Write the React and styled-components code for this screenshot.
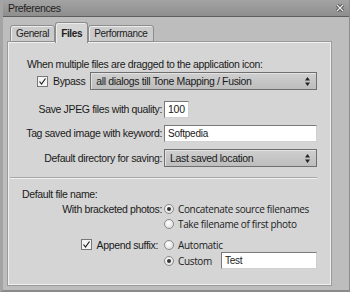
import React from 'react';
import styled, { createGlobalStyle } from 'styled-components';

const GlobalStyle = createGlobalStyle`
  html, body {
    margin: 0;
    padding: 0;
    background: #bcbcbc;
  }
  body {
    font-family: "Liberation Sans", Arial, sans-serif;
    font-size: 10.5px;
    letter-spacing: -0.35px;
    color: #1a1a1a;
  }
`;

const Window = styled.div`
  width: 350px;
  height: 292px;
  box-sizing: border-box;
  display: flex;
  flex-direction: column;
  background: #bdbdbd;
  border-left: 3px solid #a4a4a4;
  border-right: 1px solid #8c8c8c;
  border-bottom: 2px solid #8a8a8a;
  overflow: hidden;
`;

const TitleBar = styled.div`
  height: 16px;
  margin-left: -3px;
  margin-right: -1px;
  flex: none;
  display: flex;
  align-items: center;
  justify-content: space-between;
  padding: 0 6px 0 8px;
  background: linear-gradient(#a3a3a3, #8e8e8e);
  border-bottom: 1px solid #5e5e5e;
  color: #1e1e1e;
`;

const CloseButton = styled.svg`
  width: 8px;
  height: 8px;
`;

const Body = styled.div`
  flex: 1;
  display: flex;
  flex-direction: column;
  padding: 5px 18px 5px 5px;
`;

const TabRow = styled.div`
  display: flex;
  align-items: flex-end;
  height: 20px;
  padding-left: 2px;
  position: relative;
  z-index: 1;
`;

const Tab = styled.div`
  box-sizing: border-box;
  height: ${p => (p.$active ? '21px' : '17px')};
  margin-bottom: ${p => (p.$active ? '-1px' : '0')};
  padding: 0 5px;
  display: flex;
  align-items: center;
  border: 1px solid #8d8d8d;
  border-bottom: ${p => (p.$active ? 'none' : '1px solid #8d8d8d')};
  border-radius: 3px 3px 0 0;
  background: ${p => (p.$active ? '#d5d5d5' : '#cbcbcb')};
  box-shadow: inset 1px 1px 0 #ececec;
  font-size: 10px;
  font-weight: ${p => (p.$active ? 'bold' : 'normal')};
  color: #222;
`;

const Panel = styled.div`
  flex: 1;
  box-sizing: border-box;
  background: #d5d5d5;
  border: 1px solid #f0f0f0;
  box-shadow: 0 0 0 1px #9a9a9a;
  display: grid;
  grid-template-columns: 153px 1fr;
  column-gap: 2px;
  align-content: start;
  padding: 0 13px 0 0;
`;

const Wide = styled.div`
  grid-column: 1 / -1;
  display: flex;
  align-items: center;
  padding-left: ${p => p.$indent || 0}px;
  margin-top: ${p => p.$top || 0}px;
  height: ${p => p.$h || 16}px;
`;

const Label = styled.div`
  display: flex;
  align-items: center;
  justify-content: flex-end;
  gap: 5px;
  white-space: nowrap;
  margin-top: ${p => p.$top || 0}px;
  padding-right: ${p => p.$pr || 0}px;
  height: ${p => p.$h || 16}px;
`;

const Control = styled.div`
  display: flex;
  align-items: center;
  margin-top: ${p => p.$top || 0}px;
  height: ${p => p.$h || 16}px;
`;

const Select = styled.div`
  box-sizing: border-box;
  flex: 1;
  height: 18px;
  display: flex;
  align-items: center;
  justify-content: space-between;
  padding: 0 6px 0 5px;
  margin-left: ${p => p.$ml || 0}px;
  background: linear-gradient(#cfcfcf, #bdbdbd);
  border: 1px solid #6f6f6f;
  box-shadow: inset 1px 1px 0 #e2e2e2;
  color: #1a1a1a;
`;

const Arrows = styled.svg`
  width: 5px;
  height: 9px;
`;

const Input = styled.div`
  box-sizing: border-box;
  width: ${p => (p.$w ? `${p.$w}px` : 'auto')};
  flex: ${p => (p.$w ? 'none' : '1')};
  height: 17px;
  background: #fff;
  border: 1px solid #7a7a7a;
  border-right-color: #d0d0d0;
  border-bottom-color: #d0d0d0;
  padding: 0 3px;
  display: flex;
  align-items: center;
  font-family: "Liberation Sans", Arial, sans-serif;
  font-size: ${p => (p.$small ? '10px' : '10.5px')};
  letter-spacing: -0.25px;
  margin-left: ${p => p.$ml || 0}px;
`;

const Check = styled.span`
  box-sizing: border-box;
  width: 11px;
  height: 11px;
  flex: none;
  background: #f4f4f4;
  border: 1px solid #777;
  display: inline-flex;
  align-items: center;
  justify-content: center;
`;

const CheckText = styled.span`
  margin-left: 5px;
`;

const Separator = styled.div`
  grid-column: 1 / -1;
  margin: 10px 0 0 1px;
  height: 0;
  border-top: 1px solid #a9a9a9;
  border-bottom: 1px solid #efefef;
`;

const RadioGroup = styled.div`
  display: flex;
  flex-direction: column;
  margin-top: ${p => p.$top || 0}px;
`;

const RadioRow = styled.div`
  display: flex;
  align-items: center;
  height: ${p => p.$h || 15}px;
  gap: 4px;
  font-family: "Open Sans", "Liberation Sans", sans-serif;
  font-size: 10px;
  letter-spacing: -0.35px;
  color: #222;
`;

const Radio = styled.span`
  box-sizing: border-box;
  width: 10px;
  height: 10px;
  flex: none;
  border-radius: 50%;
  border: 1px solid #8a8a8a;
  background: radial-gradient(circle at 40% 35%, #ffffff, #d8d8d8);
  display: inline-flex;
  align-items: center;
  justify-content: center;
  &::after {
    content: '';
    width: 4px;
    height: 4px;
    border-radius: 50%;
    background: ${p => (p.$on ? '#333' : 'transparent')};
  }
`;

const CheckMark = () => (
  <Check>
    <svg width="9" height="9" viewBox="0 0 9 9">
      <path d="M1.5 4.5 L3.5 7 L7.5 1.5" fill="none" stroke="#222" strokeWidth="1.2" />
    </svg>
  </Check>
);

const SelectArrows = () => (
  <Arrows viewBox="0 0 5 9">
    <path d="M2.5 0 L5 3.5 H0 Z M0 5.5 H5 L2.5 9 Z" fill="#222" />
  </Arrows>
);

export default function App() {
  return (
    <>
      <GlobalStyle />
      <Window>
        <TitleBar>
          <span>Preferences</span>
          <CloseButton viewBox="0 0 8 8">
            <path d="M1 1 L7 7 M7 1 L1 7" stroke="#3a3a3a" strokeWidth="3" />
            <path d="M1 1 L7 7 M7 1 L1 7" stroke="#f2f2f2" strokeWidth="1.4" />
          </CloseButton>
        </TitleBar>
        <Body>
          <TabRow>
            <Tab>General</Tab>
            <Tab $active>Files</Tab>
            <Tab>Performance</Tab>
          </TabRow>
          <Panel>
            <Wide $indent={18} $top={13}>
              When multiple files are dragged to the application icon:
            </Wide>
            <Wide $indent={28} $top={0} $h={18}>
              <CheckMark />
              <CheckText>Bypass</CheckText>
              <Select $ml={5}>
                <span>all dialogs till Tone Mapping / Fusion</span>
                <SelectArrows />
              </Select>
            </Wide>

            <Label $top={11}>Save JPEG files with quality:</Label>
            <Control $top={11}>
              <Input $w={25}>100</Input>
            </Control>

            <Label $top={8}>Tag saved image with keyword:</Label>
            <Control $top={8}>
              <Input $small>Softpedia</Input>
            </Control>

            <Label $top={8} $h={18}>Default directory for saving:</Label>
            <Control $top={8} $h={18}>
              <Select>
                <span>Last saved location</span>
                <SelectArrows />
              </Select>
            </Control>

            <Separator />

            <Wide $indent={13} $top={7}>Default file name:</Wide>

            <Label $top={-1} $h={15}>With bracketed photos:</Label>
            <RadioGroup $top={-1}>
              <RadioRow>
                <Radio $on />
                Concatenate source filenames
              </RadioRow>
              <RadioRow>
                <Radio />
                Take filename of first photo
              </RadioRow>
            </RadioGroup>

            <Label $top={6} $h={15} $pr={4}>
              <CheckMark />
              Append suffix:
            </Label>
            <RadioGroup $top={6}>
              <RadioRow>
                <Radio />
                Automatic
              </RadioRow>
              <RadioRow $h={17}>
                <Radio $on />
                Custom
                <Input $ml={5} $small>Test</Input>
              </RadioRow>
            </RadioGroup>
          </Panel>
        </Body>
      </Window>
    </>
  );
}
